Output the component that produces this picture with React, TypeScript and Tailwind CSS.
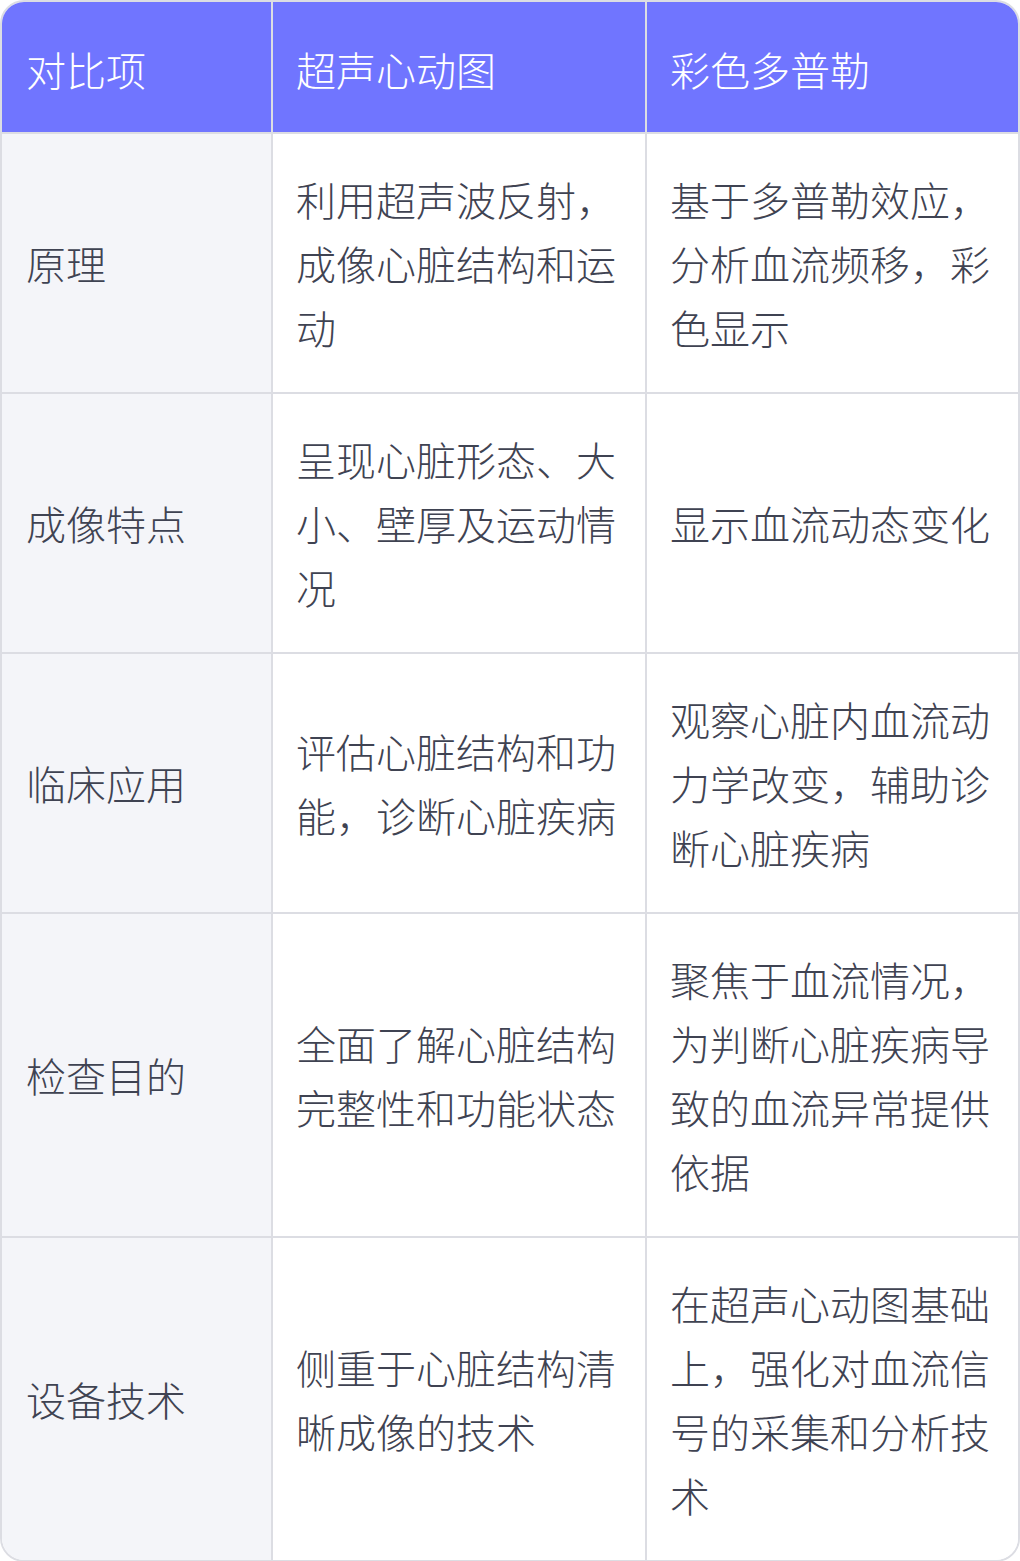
import React from "react";

const headers = ["对比项", "超声心动图", "彩色多普勒"];
const rows: [string, string, string][] = [
  ["原理", "利用超声波反射，成像心脏结构和运动", "基于多普勒效应，分析血流频移，彩色显示"],
  ["成像特点", "呈现心脏形态、大小、壁厚及运动情况", "显示血流动态变化"],
  ["临床应用", "评估心脏结构和功能，诊断心脏疾病", "观察心脏内血流动力学改变，辅助诊断心脏疾病"],
  ["检查目的", "全面了解心脏结构完整性和功能状态", "聚焦于血流情况，为判断心脏疾病导致的血流异常提供依据"],
  ["设备技术", "侧重于心脏结构清晰成像的技术", "在超声心动图基础上，强化对血流信号的采集和分析技术"],
];

export default function App() {
  return (
    <div
      className="w-[1020px] bg-white font-light"
      style={{ fontFamily: '"Noto Sans CJK SC", "Noto Sans", sans-serif' }}
    >
      <div className="overflow-hidden rounded-[24px] border-2 border-[#dcdde3]">
        <div className="grid grid-cols-[271px_374px_1fr] bg-[#7075ff] border-b-2 border-[#dcdde3]">
          {headers.map((h, i) => (
            <div
              key={h}
              className={`pt-[35px] pb-[31px] text-[40px] leading-[64px] text-white ${
                i === 0 ? "pl-[24px] pr-[24px]" : "pl-[23px] pr-[25px]"
              } ${i < 2 ? "border-r-2 border-[#dcdde3]" : ""}`}
            >
              {h}
            </div>
          ))}
        </div>
        {rows.map((r, ri) => (
          <div
            key={r[0]}
            className={`grid grid-cols-[271px_374px_1fr] ${
              ri < rows.length - 1 ? "border-b-2 border-[#dcdde3]" : ""
            }`}
          >
            <div className="flex items-center border-r-2 border-[#dcdde3] bg-[#f4f5f9] pl-[24px] pr-[24px] py-[33px] text-[40px] leading-[64px] text-[#3f4352]">
              {r[0]}
            </div>
            <div className="flex items-center border-r-2 border-[#dcdde3] bg-white pl-[23px] pr-[25px] py-[33px] text-[40px] leading-[64px] text-[#3f4352]">
              <span>{r[1]}</span>
            </div>
            <div className="flex items-center bg-white pl-[23px] pr-[25px] py-[33px] text-[40px] leading-[64px] text-[#3f4352]">
              <span>{r[2]}</span>
            </div>
          </div>
        ))}
      </div>
    </div>
  );
}
